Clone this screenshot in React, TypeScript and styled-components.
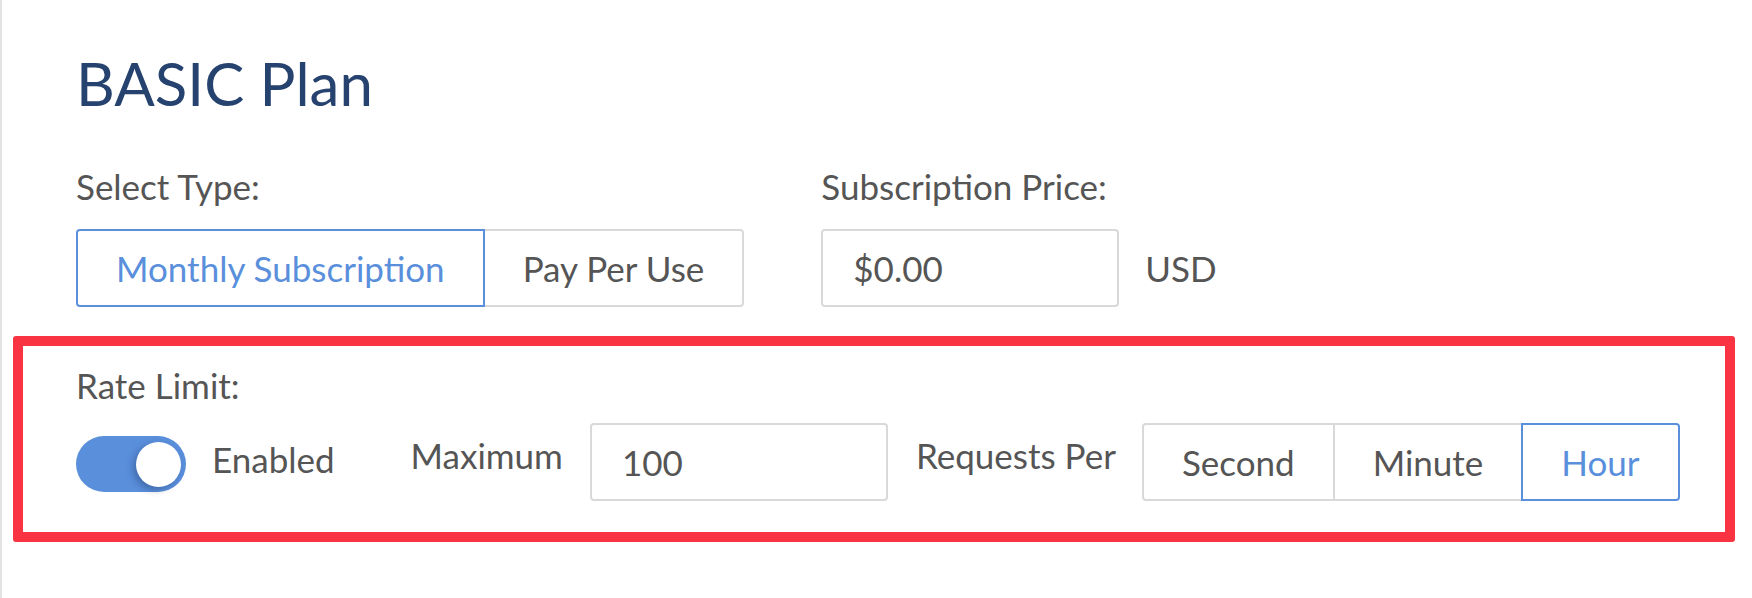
import React, { useState } from "react";
import styled, { createGlobalStyle } from "styled-components";

const GlobalStyle = createGlobalStyle`
  html, body {
    margin: 0;
    padding: 0;
    background: #ffffff;
  }
  body {
    font-family: Lato, "Noto Sans", "Liberation Sans", sans-serif;
    color: #555555;
  }
  * { box-sizing: border-box; }
`;

const Page = styled.div`
  min-height: 598px;
  border-left: 2px solid #e3e3e3;
  padding: 47px 0 0 11px;
`;

const Header = styled.div`
  padding-left: 63px;
`;

const Title = styled.h1`
  margin: 0;
  font-size: 60px;
  line-height: 72px;
  font-weight: 400;
  color: #26426e;
`;

const FieldRow = styled.div`
  display: flex;
  gap: 77px;
  margin-top: 47px;
`;

const Field = styled.div`
  display: flex;
  flex-direction: column;
`;

const Label = styled.div<{ $gap: number }>`
  font-size: 35px;
  line-height: 41px;
  color: #555555;
  margin-bottom: ${(p) => p.$gap}px;
`;

const Inline = styled.div`
  display: flex;
  align-items: center;
  gap: 26px;
`;

const Group = styled.div`
  display: inline-flex;
`;

const SegButton = styled.button<{ $active: boolean }>`
  position: relative;
  z-index: ${(p) => (p.$active ? 1 : 0)};
  height: 78px;
  padding: 0 38px;
  margin-left: -2px;
  background: #ffffff;
  border: 2px solid ${(p) => (p.$active ? "#5a8fdc" : "#d9d9d9")};
  color: ${(p) => (p.$active ? "#5a8fdc" : "#555555")};
  font-family: Lato, "Noto Sans", sans-serif;
  font-size: 35px;
  line-height: 41px;
  cursor: pointer;
  border-radius: 0;
  &:first-child {
    margin-left: 0;
    border-radius: 4px 0 0 4px;
  }
  &:last-child {
    border-radius: 0 4px 4px 0;
  }
`;

const TextInput = styled.input`
  width: 298px;
  height: 78px;
  padding: 0 30px;
  border: 2px solid #d9d9d9;
  border-radius: 4px;
  font-family: Lato, "Noto Sans", sans-serif;
  font-size: 35px;
  color: #555555;
  outline: none;
  background: #ffffff;
`;

const Unit = styled.span`
  font-size: 35px;
  line-height: 41px;
  color: #555555;
`;

const Highlight = styled.section`
  width: 1722px;
  margin-top: 29px;
  border: 10px solid #fa3343;
  border-radius: 3px;
  padding: 19px 0 31px 53px;
`;

const RateRow = styled.div`
  display: flex;
  align-items: center;
  height: 78px;
`;

const Track = styled.button<{ $on: boolean }>`
  position: relative;
  width: 110px;
  height: 56px;
  margin-top: 4px;
  border: none;
  border-radius: 28px;
  padding: 0;
  background: ${(p) => (p.$on ? "#5a8fdc" : "#cccccc")};
  cursor: pointer;
  flex-shrink: 0;
`;

const Knob = styled.span<{ $on: boolean }>`
  position: absolute;
  top: 6px;
  left: ${(p) => (p.$on ? "60px" : "6px")};
  width: 45px;
  height: 45px;
  border-radius: 50%;
  background: #ffffff;
  box-shadow: -3px 3px 7px rgba(20, 40, 80, 0.35);
`;

const RowText = styled.span<{ $lift: number; $left: number }>`
  font-size: 35px;
  line-height: 41px;
  color: #555555;
  margin-left: ${(p) => p.$left}px;
  margin-bottom: ${(p) => p.$lift * 2}px;
  white-space: nowrap;
`;

const Spaced = styled.div<{ $left: number }>`
  margin-left: ${(p) => p.$left}px;
  display: flex;
`;

export default function App() {
  const [type, setType] = useState("Monthly Subscription");
  const [per, setPer] = useState("Hour");
  const [on, setOn] = useState(true);

  return (
    <>
      <GlobalStyle />
      <Page>
        <Header>
          <Title>BASIC Plan</Title>
          <FieldRow>
            <Field>
              <Label $gap={22}>Select Type:</Label>
              <Group>
                {["Monthly Subscription", "Pay Per Use"].map((t) => (
                  <SegButton key={t} $active={type === t} onClick={() => setType(t)}>
                    {t}
                  </SegButton>
                ))}
              </Group>
            </Field>
            <Field>
              <Label $gap={22}>Subscription Price:</Label>
              <Inline>
                <TextInput defaultValue="$0.00" />
                <Unit>USD</Unit>
              </Inline>
            </Field>
          </FieldRow>
        </Header>
        <Highlight>
          <Label $gap={17}>Rate Limit:</Label>
          <RateRow>
            <Track $on={on} onClick={() => setOn(!on)} aria-label="Rate limit">
              <Knob $on={on} />
            </Track>
            <RowText $lift={3} $left={26}>Enabled</RowText>
            <RowText $lift={7} $left={76}>Maximum</RowText>
            <Spaced $left={27}>
              <TextInput defaultValue="100" />
            </Spaced>
            <RowText $lift={7} $left={28}>Requests Per</RowText>
            <Spaced $left={26}>
              <Group>
                {["Second", "Minute", "Hour"].map((t) => (
                  <SegButton key={t} $active={per === t} onClick={() => setPer(t)}>
                    {t}
                  </SegButton>
                ))}
              </Group>
            </Spaced>
          </RateRow>
        </Highlight>
      </Page>
    </>
  );
}
